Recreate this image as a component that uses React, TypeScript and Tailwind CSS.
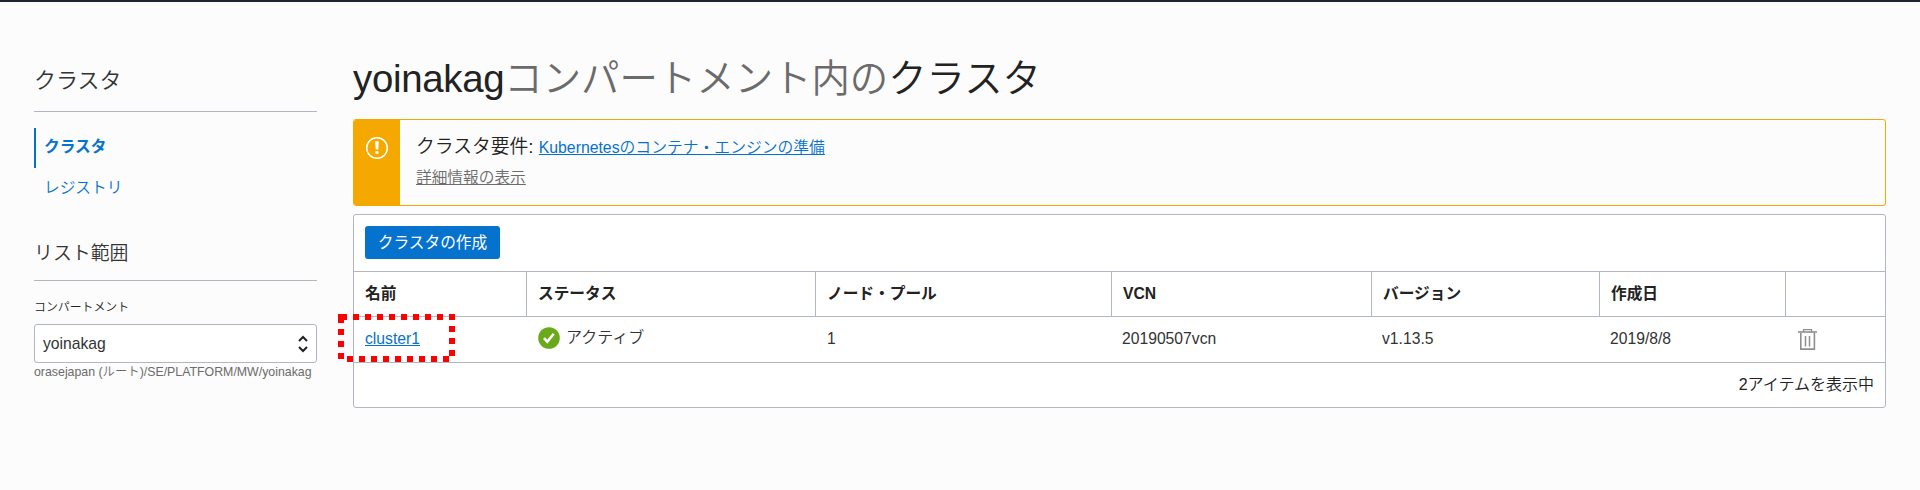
import type { ReactNode } from "react";

function SideHeading({ children, className }: { children: ReactNode; className: string }) {
  return (
    <h2 className={`border-b border-[#b1b7c1] font-[350] text-[#333] ${className}`}>{children}</h2>
  );
}

function SelectArrows() {
  return (
    <svg width="12" height="18" viewBox="0 0 12 18" fill="none" stroke="#222" strokeWidth="2">
      <path d="M2 6l4-4 4 4M2 12l4 4 4-4" />
    </svg>
  );
}

function WarningIcon() {
  return (
    <svg width="24" height="24" viewBox="0 0 24 24" fill="none">
      <circle cx="12" cy="12" r="10.3" stroke="#fff" strokeWidth="1.5" />
      <path d="M10.2 5.2h3.6l-.5 8.3h-2.6z" fill="#fff" />
      <rect x="10.5" y="15.2" width="3" height="2.6" fill="#fff" />
    </svg>
  );
}

function ActiveIcon() {
  return (
    <svg width="22" height="22" viewBox="0 0 22 22" fill="none" className="shrink-0">
      <circle cx="11" cy="11" r="10.8" fill="#6aaa1a" />
      <path d="M6 11.2l3.3 3.6 6.4-8" stroke="#fff" strokeWidth="2.6" />
    </svg>
  );
}

function TrashIcon() {
  return (
    <svg width="19" height="21" viewBox="0 0 19 21" fill="none" stroke="#8f8f8f">
      <path d="M0 3h19" strokeWidth="1.6" />
      <path d="M5.5 3V.7h8V3" strokeWidth="1.3" />
      <path d="M2.8 3.5v16.6h13.6V3.5" strokeWidth="1.6" />
      <path d="M7.5 7v10.5M11.5 7v10.5" strokeWidth="1.5" />
    </svg>
  );
}

function Highlight() {
  return (
    <svg
      className="pointer-events-none absolute -top-[3px] -left-[16px]"
      width="117"
      height="48"
      viewBox="0 0 117 48"
      fill="none"
    >
      <rect x="3" y="3" width="111" height="42" stroke="#f00" strokeWidth="6" strokeDasharray="6 6" />
    </svg>
  );
}

const columns = ["名前", "ステータス", "ノード・プール", "VCN", "バージョン", "作成日", ""];
const grid = "grid grid-cols-[173px_289px_296px_260px_228px_186px_1fr]";

export default function App() {
  return (
    <div className="h-[490px] w-[1920px] overflow-hidden border-t-2 border-[#1c2733] bg-[#fcfcfc] font-['Liberation_Sans','Noto_Sans_CJK_JP',sans-serif] text-[15.7px] leading-6 text-[#222]">
      <div className="flex pr-[34px] pl-[34px]">
        <aside className="w-[283px] shrink-0 pt-[58px]">
          <SideHeading className="h-[52px] text-[22px] leading-[41px]">クラスタ</SideHeading>
          <nav className="mt-4 flex flex-col text-[#0572ce]">
            <a className="h-10 border-l-2 border-[#0572ce] pl-2 leading-[38px] font-bold">クラスタ</a>
            <a className="h-10 pl-[10px] leading-10 font-[350]">レジストリ</a>
          </nav>
          <SideHeading className="mt-[33px] h-[40px] text-[18.9px] leading-[25px]">リスト範囲</SideHeading>
          <label className="mt-[14px] block text-[11.9px] leading-6 font-[350]">コンパートメント</label>
          <div className="mt-[5px] flex h-[39px] items-center justify-between rounded-[3px] border border-[#b1b7c1] bg-white pr-[7px] pl-2">
            <span className="text-[#333]">yoinakag</span>
            <SelectArrows />
          </div>
          <p className="text-[12.35px] leading-[18px] font-[350] whitespace-nowrap text-[#6b6b6b]">
            orasejapan (ルート)/SE/PLATFORM/MW/yoinakag
          </p>
        </aside>

        <main className="ml-9 min-w-0 flex-1 pt-[47px]">
          <h1 className="h-[70px] text-[38.4px] leading-[60px] font-[350] whitespace-nowrap">
            <span className="tracking-[-0.3px]">yoinakag</span>
            <span className="text-[#6b6b6b]">コンパートメント内の</span>クラスタ
          </h1>

          <section className="flex h-[87px] overflow-hidden rounded-[3px] border border-[#f5a800]">
            <div className="flex w-[46px] justify-center bg-[#f5a800] pt-4">
              <WarningIcon />
            </div>
            <div className="pt-[14px] pl-4">
              <p className="text-[18.8px] leading-[26px] font-[350]">
                クラスタ要件:{" "}
                <a className="text-[15.8px] text-[#0572ce] underline">
                  Kubernetesのコンテナ・エンジンの準備
                </a>
              </p>
              <a className="mt-[5px] block font-[350] text-[#6b6b6b] underline">詳細情報の表示</a>
            </div>
          </section>

          <section className="mt-2 h-[194px] rounded-[3px] border border-[#b1b7c1] bg-white">
            <div className="h-14 pt-[11px] pl-[11px]">
              <button className="h-[33px] w-[135px] rounded-[3px] bg-[#0572ce] leading-[33px] font-normal text-white">
                クラスタの作成
              </button>
            </div>
            <div className={`${grid} h-[46px] border-y border-[#b1b7c1]`}>
              {columns.map((name, i) => (
                <div
                  key={i}
                  className="border-r border-[#b1b7c1] pl-[11px] leading-[43px] font-bold last:border-r-0"
                >
                  {name}
                </div>
              ))}
            </div>
            <div className={`${grid} h-[46px] border-b border-[#b1b7c1] leading-[43px] font-[350] text-[#333]`}>
              <div className="relative pl-[11px]">
                <a className="text-[#0572ce] underline">cluster1</a>
                <Highlight />
              </div>
              <div className="flex items-center gap-[6px] pb-[3px] pl-[11px] text-base">
                <ActiveIcon />
                アクティブ
              </div>
              <div className="pl-[11px]">1</div>
              <div className="pl-[10px]">20190507vcn</div>
              <div className="pl-[10px]">v1.13.5</div>
              <div className="pl-[10px]">2019/8/8</div>
              <div className="pt-3 pl-3">
                <TrashIcon />
              </div>
            </div>
            <div className="pr-[11px] text-right text-base leading-[43px] font-[350]">2アイテムを表示中</div>
          </section>
        </main>
      </div>
    </div>
  );
}
